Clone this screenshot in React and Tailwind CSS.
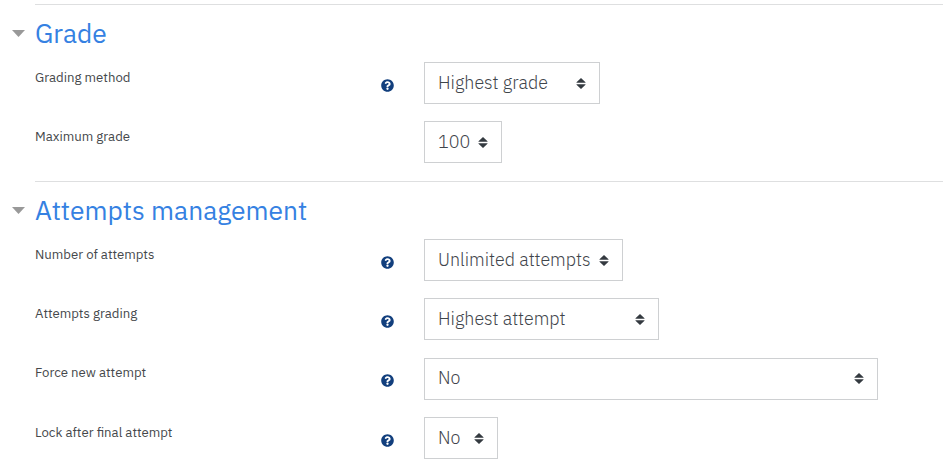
import { FaQuestionCircle } from "react-icons/fa";

const gradeRows = [
  { label: "Grading method", help: true, value: "Highest grade", box: "w-[176px]", row: "h-[59px]" },
  { label: "Maximum grade", help: false, value: "100", box: "w-[78px]", row: "h-[60px]" },
];

const attemptRows = [
  { label: "Number of attempts", help: true, value: "Unlimited attempts", box: "w-[199px]", row: "h-[59px]" },
  { label: "Attempts grading", help: true, value: "Highest attempt", box: "w-[235px]", row: "h-[59px]" },
  { label: "Force new attempt", help: true, value: "No", box: "w-[454px] mt-px pb-[2px]", row: "h-[60px]" },
  { label: "Lock after final attempt", help: true, value: "No", box: "w-[74px]", row: "h-[58px]" },
];

function SortArrows() {
  return (
    <svg className="h-[11px] w-[10px] shrink-0" viewBox="0 0 10 11" fill="#343a40" aria-hidden="true">
      <path d="M5 0 9.5 4.2v.6H.5v-.6zM5 11 .5 6.8v-.6h9v.6z" />
    </svg>
  );
}

function FormRow({ label, help, value, box, row }) {
  return (
    <div className={`flex items-start pl-[35px] ${row}`}>
      <div className="w-[346px] pt-[5px] text-[13.2px] leading-5 font-normal whitespace-nowrap text-[#45484b]">
        <span>{label}</span>
      </div>
      <div className="w-[43px] pt-[17px]">
        {help && <FaQuestionCircle className="size-[13px] text-[#123f7d]" />}
      </div>
      <button className={`flex h-[42px] items-center justify-between border border-[#ced0d2] bg-white pr-[13px] pl-[13px] text-[17.9px] leading-6 font-light whitespace-nowrap text-[#3f454b] ${box}`}>
        <span>{value}</span>
        <SortArrows />
      </button>
    </div>
  );
}

function Section({ title, rows }) {
  return (
    <section>
      <div className="ml-[35px] h-px bg-[#dedfe0]" />
      <h3 className="flex h-[57px] items-center text-[26.4px] leading-8 font-normal text-[#3581e2]">
        <svg className="ml-[11.5px] mr-[10.5px] h-[7px] w-[13px]" viewBox="0 0 13 7" fill="#999" aria-hidden="true">
          <path d="M0 0h13L6.5 7z" />
        </svg>
        <span className="pb-[2px]">{title}</span>
      </h3>
      {rows.map((r) => (
        <FormRow key={r.label} {...r} />
      ))}
    </section>
  );
}

export default function App() {
  return (
    <main className="h-[475px] w-[943px] overflow-hidden bg-white pt-1 font-['IBM_Plex_Sans',Roboto,sans-serif]">
      <Section title="Grade" rows={gradeRows} />
      <Section title="Attempts management" rows={attemptRows} />
    </main>
  );
}
